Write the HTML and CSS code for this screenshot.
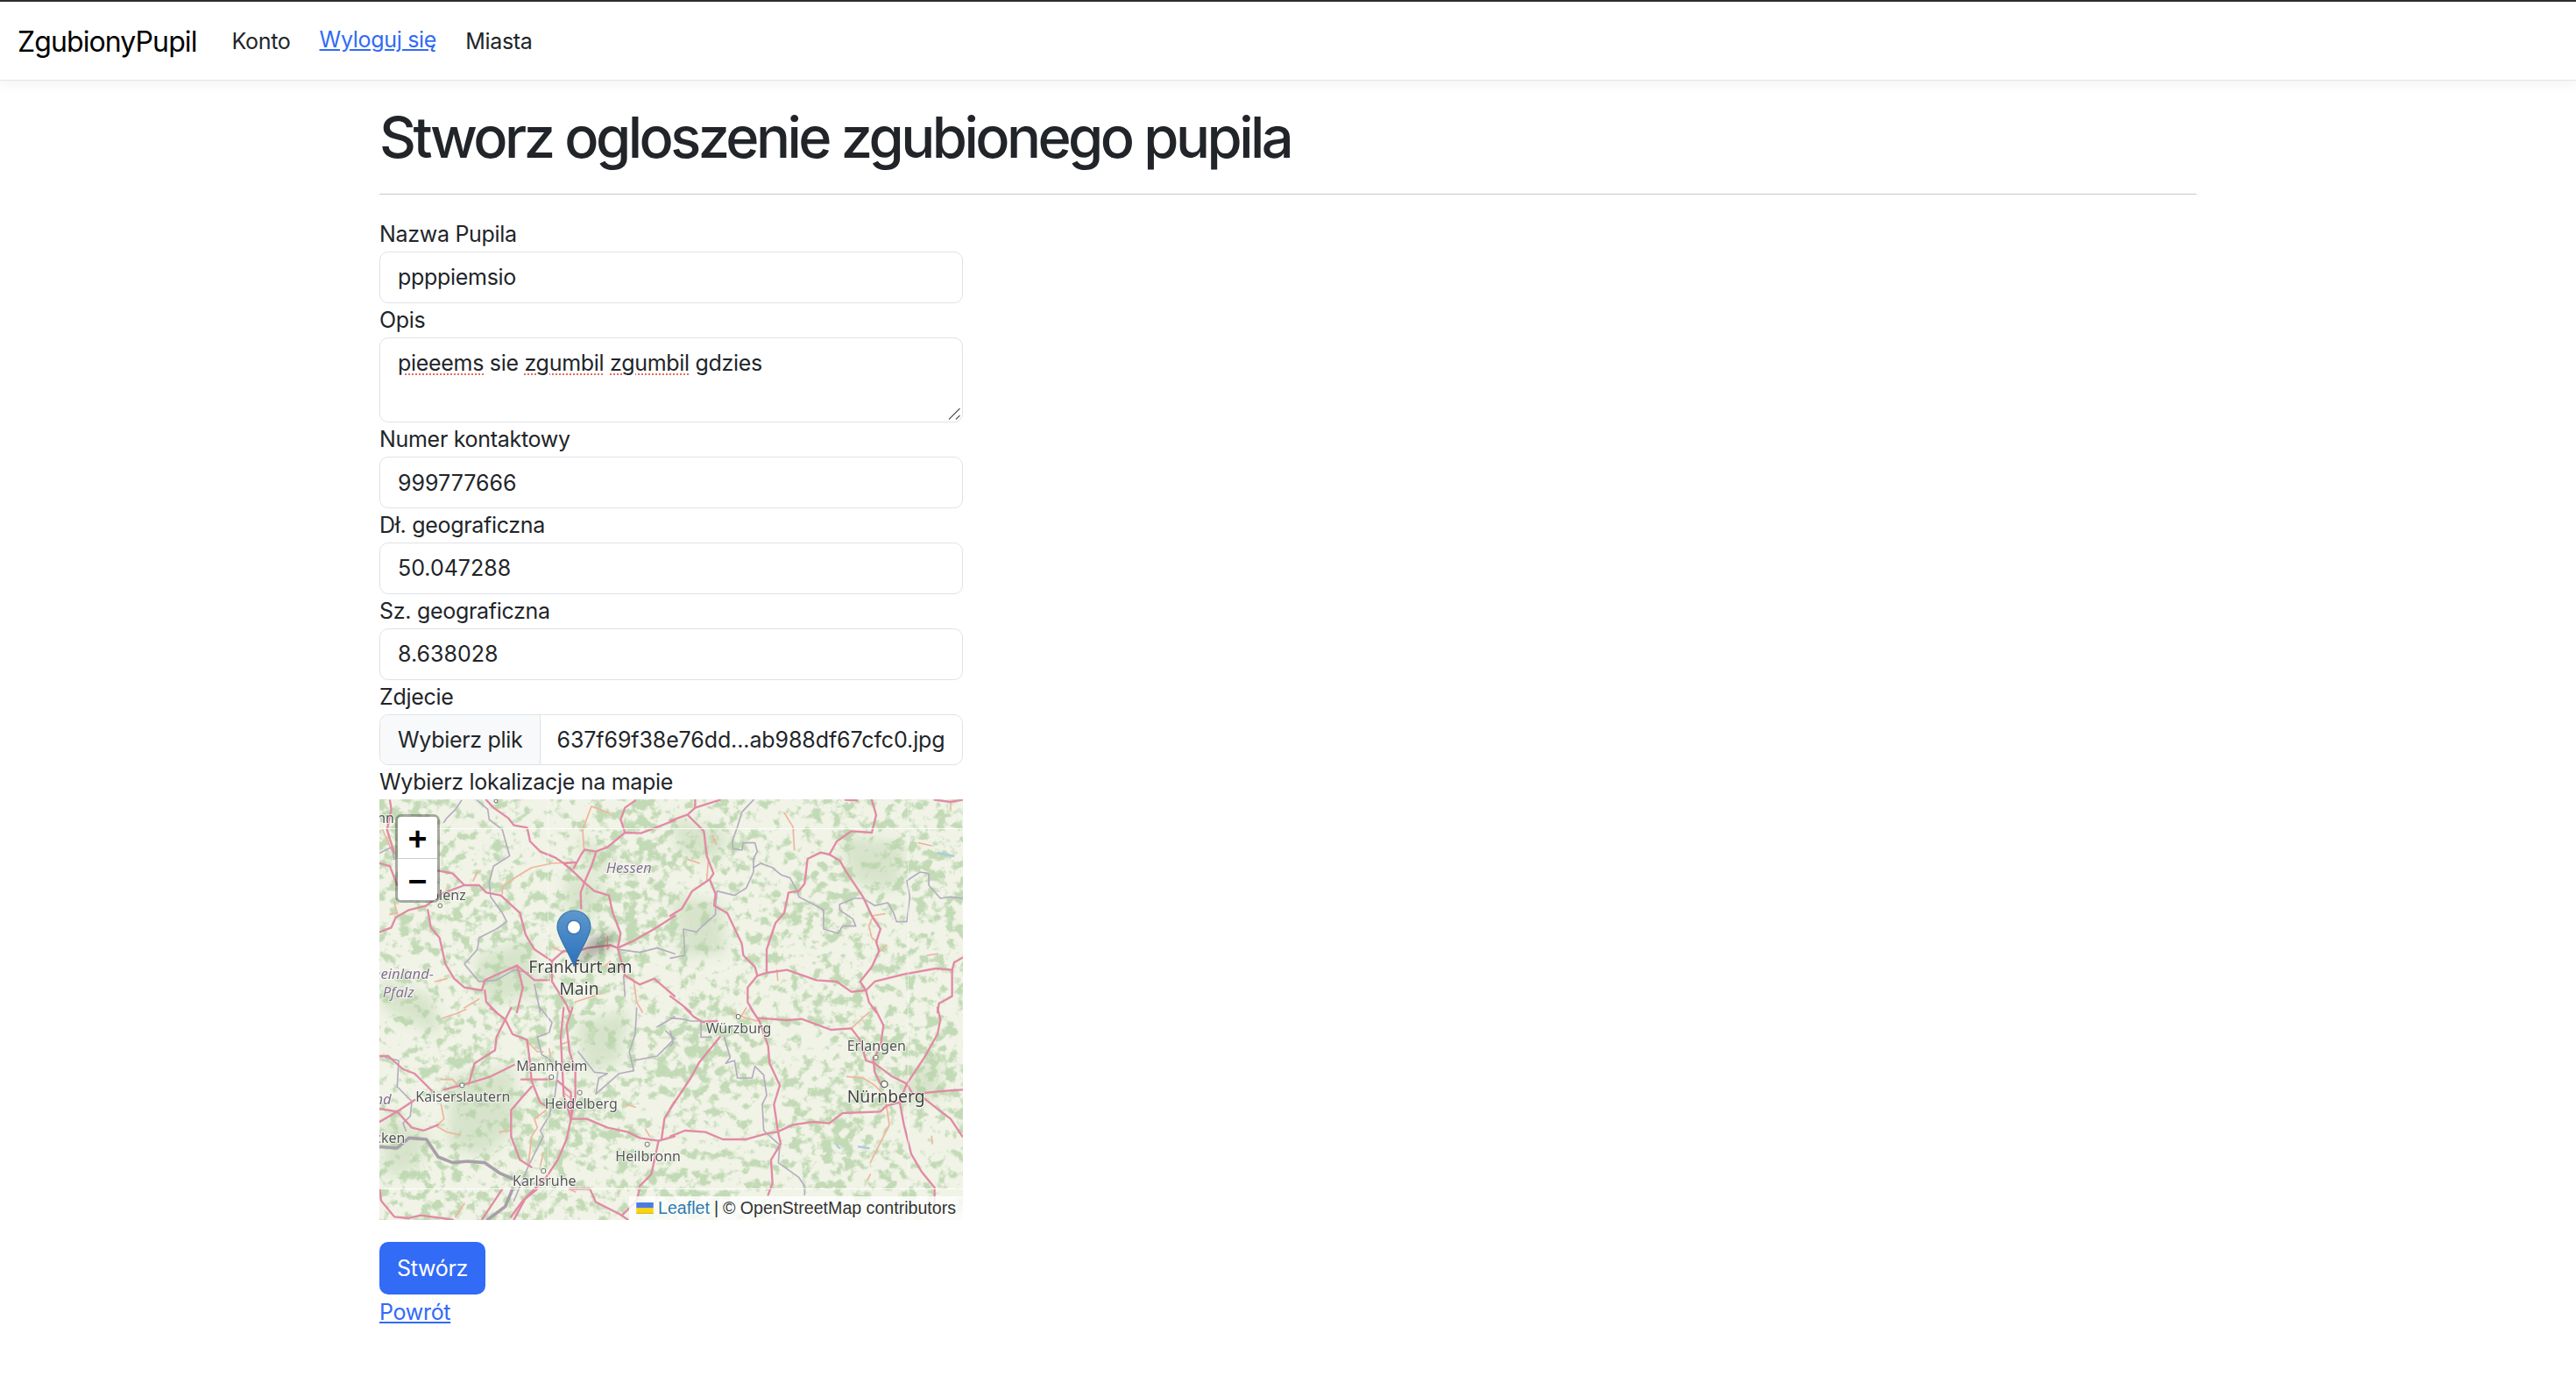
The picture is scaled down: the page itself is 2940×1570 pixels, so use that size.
FILE: index.html
```html
<!DOCTYPE html>
<html lang="pl">
<head>
  <meta charset="UTF-8" />
  <title>Stworz ogloszenie</title>
  <link rel="stylesheet" href="styles.css">
</head>
<body>

  <nav class="navbar">
    <a class="brand" href="#">ZgubionyPupil</a>
    <a class="nav-link" href="#">Konto</a>
    <a class="nav-link logout" href="#">Wyloguj się</a>
    <a class="nav-link" href="#">Miasta</a>
  </nav>

  <main class="container">
    <h1>Stworz ogloszenie zgubionego pupila</h1>
    <hr>

    <form class="pet-form">
      <label>Nazwa Pupila</label>
      <input class="form-control" type="text" value="ppppiemsio">

      <label>Opis</label>
      <div class="form-control textarea">
        <span class="typo">pieeems</span> sie <span class="typo">zgumbil</span> <span class="typo">zgumbil</span> gdzies
        <svg class="grip" viewBox="0 0 14 14" width="14" height="14"><path d="M1 13.5 L13.5 1 M9 13.5 L13.5 9"/></svg>
      </div>

      <label>Numer kontaktowy</label>
      <input class="form-control numeric" type="text" value="999777666">

      <label>Dł. geograficzna</label>
      <input class="form-control numeric" type="text" value="50.047288">

      <label>Sz. geograficzna</label>
      <input class="form-control numeric" type="text" value="8.638028">

      <label>Zdjecie</label>
      <div class="form-control file-input">
        <span class="file-button">Wybierz plik</span>
        <span class="file-name">637f69f38e76dd...ab988df67cfc0.jpg</span>
      </div>

      <label>Wybierz lokalizacje na mapie</label>
      <div class="map">
        <svg class="tiles" viewBox="0 0 666 480" width="666" height="480">
          <defs>
            <filter id="woods" x="0" y="0" width="100%" height="100%" color-interpolation-filters="sRGB">
              <feTurbulence type="fractalNoise" baseFrequency="0.012" numOctaves="2" seed="4"/>
              <feColorMatrix type="matrix" values="1 0 0 0 0  0 1 0 0 0  0 0 1 0 0  0 0 0 0 1" result="big"/>
              <feTurbulence type="fractalNoise" baseFrequency="0.085" numOctaves="4" seed="11"/>
              <feColorMatrix type="matrix" values="1 0 0 0 0  0 1 0 0 0  0 0 1 0 0  0 0 0 0 1" result="fine"/>
              <feComposite in="big" in2="fine" operator="arithmetic" k1="0" k2="0.25" k3="0.75" k4="0"/>
              <feColorMatrix type="matrix" values="0 0 0 0 0  0 0 0 0 0  0 0 0 0 0  8 0 0 0 -4"/>
              <feComposite in="SourceGraphic" operator="in"/>
            </filter>
            <filter id="soft"><feGaussianBlur stdDeviation="7"/></filter>
            <filter id="shade" x="-50%" y="-50%" width="200%" height="200%"><feGaussianBlur stdDeviation="5"/></filter>
          </defs>

          <rect class="land" width="666" height="480"/>
          <rect class="woods" width="666" height="480" filter="url(#woods)"/>

          <!-- big forests -->
          <g class="forest" filter="url(#soft)">
            <path d="M82 318 L152 305 L158 372 L120 408 L78 395 Z"/>
            <path d="M5 360 L60 385 L40 425 L5 430 Z"/>
            <path d="M525 40 L600 50 L590 105 L540 95 Z"/>
            <path d="M335 20 L400 40 L385 70 L340 60 Z"/>
            <path d="M225 40 L270 70 L240 90 Z"/>
            <path d="M110 180 L170 160 L185 220 L120 235 Z"/>
            <path d="M3 205 L60 225 L70 270 L5 240 Z"/>
            <path d="M215 85 L260 100 L240 140 L210 120 Z"/>
            <path d="M335 110 L390 120 L395 175 L345 180 Z"/>
            <path d="M590 330 L640 290 L640 340 L600 350 Z"/>
            <path d="M225 255 L285 240 L275 300 L235 310 Z"/>
          </g>

          <!-- top left -->
          <g transform="translate(-3,-2) scale(0.3333)">
            <g class="minor">
              <path d="M430 330 L430 305 L480 270 L530 240 L600 225 L680 222"/>
              <path d="M710 180 L705 110 L735 30 L800 55"/>
              <path d="M600 510 L640 530"/>
              <path d="M790 475 L790 520 L800 505"/>
              <path d="M800 560 L780 580"/>
              <path d="M850 610 L880 625 L890 700 L910 735"/>
              <path d="M330 285 L345 255"/>
              <path d="M20 110 L50 180"/>
              <path d="M60 360 L70 395 L45 400"/>
              <path d="M680 700 L770 670"/>
              <path d="M300 720 L350 690"/>
              <path d="M240 620 L200 630"/>
            </g>
            <g class="border">
              <path d="M290 10 L270 40 L240 70 L230 85"/>
              <path d="M345 10 L380 40 L385 75 L430 110 L455 200 L400 235 L385 290 L390 340 L430 395 L445 425 L410 450 L350 480 L345 520 L300 570 L350 630 L410 625 L470 590 L520 600"/>
              <path d="M10 190 L50 170 L60 210"/>
              <path d="M830 520 L900 530 L960 515 L1020 535"/>
              <path d="M845 610 L850 680"/>
              <path d="M540 640 L560 735"/>
            </g>
            <g class="road">
              <path d="M45 10 L50 40 L35 110 L60 190"/>
              <path d="M375 8 L400 35 L450 70 L470 95 L515 103 L525 150 L560 185 L610 205 L640 225 L680 222"/>
              <path d="M640 225 L675 255 L710 290 L745 320 L795 335 L808 395 L835 465 L825 515"/>
              <path d="M675 240 L700 195 L712 178 L750 185 L790 170 L850 120 L905 122 L950 105 L1020 78"/>
              <path d="M750 190 L735 235 L712 288 L698 325 L700 380"/>
              <path d="M850 120 L835 75 L850 35 L885 10"/>
              <path d="M10 225 L45 235 L70 300"/>
              <path d="M210 250 L260 260 L300 300 L350 300 L375 325 L425 335 L490 395 L510 470 L540 520 L600 560"/>
              <path d="M10 460 L50 445 L65 410 L110 385 L170 370 L220 330 L300 300"/>
              <path d="M175 385 L185 445 L215 480 L235 570 L265 620 L300 650 L360 660 L370 625 L480 575 L540 625 L590 625"/>
              <path d="M370 660 L375 700 L410 735"/>
              <path d="M480 735 L500 650 L490 610 L480 575"/>
              <path d="M600 560 L640 525 L680 530 L720 515 L800 505 L825 515 L880 490 L950 450 L1020 405"/>
              <path d="M600 560 L600 630 L650 710 L660 735"/>
              <path d="M825 515 L850 610 L900 640 L950 620 L1020 680"/>
            </g>
            <circle class="town" cx="408" cy="12" r="6"/>
            <circle class="town" cx="217" cy="370" r="7"/>
            <text class="city" x="305" y="350" text-anchor="end">Koblenz</text>
            <text class="city" x="60" y="88" text-anchor="end">Bonn</text>
            <text class="city-lg" x="520" y="600">Frankfurt am</text>
            <text class="city-lg" x="625" y="675">Main</text>
            <text class="state" x="785" y="258">Hessen</text>
            <text class="state" x="195" y="622" text-anchor="end">Rheinland-</text>
            <text class="state" x="20" y="685">Pfalz</text>
          </g>

          <!-- top right -->
          <g transform="translate(332,-2) scale(0.3333)">
            <g class="minor">
              <path d="M390 52 L420 100 L425 180"/>
              <path d="M60 212 L100 225"/>
              <path d="M145 130 L158 160"/>
              <path d="M130 220 L125 280"/>
              <path d="M690 405 L735 398"/>
              <path d="M690 415 L680 440 L690 480 L710 495"/>
              <path d="M720 525 L740 505"/>
              <path d="M880 540 L915 535"/>
              <path d="M850 155 L895 165"/>
              <path d="M365 590 L368 625"/>
              <path d="M960 15 L960 40"/>
            </g>
            <path class="lake" d="M915 190 L970 200"/>
            <g class="border">
              <path d="M285 8 L245 50 L230 100 L212 150 L215 175 L245 180 L250 155 L290 155 L298 185 L285 210 L285 255 L260 310 L220 335 L160 320 L155 370 L155 400 L110 440 L90 460 L45 450 L50 540 L0 550"/>
              <path d="M285 240 L310 225 L350 240 L380 265 L410 275 L435 320 L440 340 L490 365 L525 385 L525 450 L575 465 L590 440 L635 440 L625 415 L580 385 L580 365 L630 345 L660 345 L700 370 L745 360 L765 395 L775 425 L810 425 L820 340 L810 285 L855 255 L885 260 L885 300 L925 345 L960 340 L1000 345"/>
            </g>
            <g class="road">
              <path d="M0 80 L60 58 L85 35 L85 8"/>
              <path d="M85 35 L170 8"/>
              <path d="M60 60 L115 115 L125 200 L148 260 L135 280 L155 330 L150 370 L195 395 L245 500 L250 540 L290 580 L298 610"/>
              <path d="M135 280 L75 320 L40 380 L0 405"/>
              <path d="M298 610 L265 650 L265 700 L285 735"/>
              <path d="M298 610 L330 600 L400 590 L500 625 L570 630 L620 665 L670 660 L700 630 L800 605 L910 585 L965 590 L965 680 L920 705 L915 735"/>
              <path d="M965 590 L972 565 L1000 548"/>
              <path d="M330 595 L330 520 L360 430 L390 395 L405 325 L440 320 L460 295 L470 210 L515 188 L545 195 L570 150 L620 115 L690 120 L705 60 L690 8"/>
              <path d="M545 195 L580 215 L600 250 L660 340 L690 405 L720 450 L705 495 L715 525 L690 580 L650 630 L670 660 L680 700 L705 735"/>
              <path d="M0 680 L40 710 L70 735"/>
              <path d="M600 8 L640 10"/>
              <path d="M905 8 L960 15 L1000 8"/>
            </g>
          </g>

          <!-- bottom left -->
          <g transform="translate(-3,238) scale(0.3333)">
            <g class="minor">
              <path d="M225 35 L270 20 L305 5"/>
              <path d="M220 245 L260 245 L275 262"/>
              <path d="M220 330 L230 380 L205 405 L240 425 L285 435"/>
              <path d="M420 425 L460 420"/>
              <path d="M520 530 L530 440 L550 410 L540 380 L580 350"/>
              <path d="M590 140 L595 165"/>
              <path d="M520 120 L550 150 L570 150"/>
              <path d="M560 540 L570 500"/>
              <path d="M630 125 L660 115"/>
              <path d="M855 330 L885 340"/>
              <path d="M660 620 L680 630"/>
              <path d="M300 670 L270 715"/>
              <path d="M920 415 L935 440"/>
              <path d="M640 290 L665 310"/>
            </g>
            <g class="border">
              <path d="M560 0 L600 50 L590 85 L550 100 L565 160 L590 175 L620 220 L610 300 L590 370 L560 420 L570 440 L520 540 L470 660"/>
              <path d="M890 0 L885 90 L865 150 L880 215 L830 225 L790 260 L750 295 L760 240 L790 225 L745 220 L690 150"/>
              <path d="M960 65 L1020 30"/>
              <path d="M880 180 L960 165 L1020 105 L990 80"/>
              <path d="M30 170 L75 180 L70 270 L120 320 L115 370 L90 395 L100 420"/>
            </g>
            <g class="border-wide">
              <path d="M10 475 L70 480 L110 445 L170 450 L210 510 L260 530 L310 525 L370 530 L420 565 L465 585"/>
              <path d="M465 620 L440 680 L380 725"/>
            </g>
            <g class="road">
              <path d="M390 0 L440 40 L410 100 L405 145 L335 190 L315 260"/>
              <path d="M440 40 L465 90 L515 110 L525 190 L530 250 L560 325 L580 335"/>
              <path d="M230 280 L315 258 L390 235 L470 195"/>
              <path d="M495 245 L590 245"/>
              <path d="M10 165 L40 165 L90 210 L130 225 L190 285"/>
              <path d="M10 345 L70 355 L120 410 L160 420 L210 400"/>
              <path d="M10 390 L70 355 L130 315"/>
              <path d="M530 270 L490 315 L460 350 L460 440 L490 520 L530 545"/>
              <path d="M460 0 L440 40"/>
              <path d="M640 0 L630 100 L640 300 L665 380"/>
              <path d="M670 0 L650 60 L660 150 L680 210 L680 300 L665 380"/>
              <path d="M620 250 L665 290 L665 380"/>
              <path d="M665 380 L650 450 L620 520 L580 580 L510 650 L470 725"/>
              <path d="M665 380 L720 380 L790 410 L860 425 L900 445 L965 455 L1020 440"/>
              <path d="M965 455 L940 570 L900 610"/>
              <path d="M1020 320 L985 380 L975 450"/>
              <path d="M430 620 L360 725"/>
              <path d="M660 620 L730 620 L750 665 L830 705 L860 725"/>
              <path d="M10 620 L15 660 L60 715 L110 720 L150 710 L260 725"/>
              <path d="M900 620 L890 660 L840 710"/>
              <path d="M550 620 L500 660 L460 715"/>
            </g>
            <rect class="town" x="285" y="258" width="14" height="14" rx="4"/>
            <rect class="town" x="591" y="230" width="14" height="14" rx="4"/>
            <rect class="town" x="688" y="283" width="14" height="14" rx="4"/>
            <rect class="town" x="564" y="551" width="14" height="14" rx="4"/>
            <rect class="town" x="919" y="460" width="14" height="14" rx="4"/>
            <text class="city" x="133" y="320">Kaiserslautern</text>
            <text class="city" x="478" y="215">Mannheim</text>
            <text class="city" x="575" y="345">Heidelberg</text>
            <text class="city" x="465" y="610">Karlsruhe</text>
            <text class="city" x="817" y="525">Heilbronn</text>
            <text class="city" x="97" y="463" text-anchor="end">Saarbrücken</text>
            <text class="state" x="50" y="330" text-anchor="end">Saarland</text>
          </g>

          <!-- bottom right -->
          <g transform="translate(332,238) scale(0.3333)">
            <g class="minor">
              <path d="M210 15 L260 35 L300 45"/>
              <path d="M260 0 L245 25"/>
              <path d="M605 235 L660 240 L700 265 L735 300 L750 400 L700 500 L685 530"/>
              <path d="M620 70 L680 15"/>
              <path d="M685 570 L675 590"/>
              <path d="M895 440 L897 465"/>
            </g>
            <path class="lake" d="M570 470 L580 480"/>
            <path class="lake" d="M645 475 L680 480"/>
            <g class="border">
              <path d="M0 35 L40 38 L70 45 L105 45 L105 100 L140 100"/>
              <path d="M185 100 L205 170 L190 190 L220 180 L230 240 L280 240 L290 200 L320 230 L330 300 L315 330 L320 420 L375 470 L370 530 L440 580 L460 610 L460 640"/>
              <path d="M0 80 L10 120 L0 130"/>
            </g>
            <g class="road">
              <path d="M50 0 L80 30 L110 48 L160 45"/>
              <path d="M300 35 L400 42 L450 38 L550 75 L620 70 L650 110 L670 180 L700 190"/>
              <path d="M305 45 L335 130 L340 190 L375 265 L355 330 L370 430 L378 465 L345 520 L350 600 L335 640"/>
              <path d="M170 100 L100 185 L70 240 L30 300 L0 345"/>
              <path d="M0 440 L50 420 L120 425 L180 450 L260 450 L330 430 L365 425 L420 400 L490 390 L545 395 L590 360 L720 355 L740 335 L800 320"/>
              <path d="M695 170 L700 220 L720 260"/>
              <path d="M700 190 L760 235 L810 260 L870 170 L915 90 L925 40 L915 0"/>
              <path d="M700 0 L730 60 L720 130 L700 170"/>
              <path d="M810 260 L785 320 L800 400 L825 500 L860 560 L905 615 L905 700"/>
              <path d="M810 260 L830 295 L930 285 L1000 280"/>
              <path d="M870 310 L920 350 L960 380 L1000 440"/>
              <path d="M275 0 L305 45"/>
            </g>
            <rect class="town" x="226" y="23" width="14" height="14" rx="4"/>
            <rect class="town" x="697" y="163" width="14" height="14" rx="4"/>
            <circle class="town big" cx="733" cy="261" r="11"/>
            <text class="city" x="122" y="88">Würzburg</text>
            <text class="city" x="605" y="148">Erlangen</text>
            <text class="city-lg" x="605" y="325">Nürnberg</text>
          </g>

          <!-- tile seams -->
          <path class="seam" d="M0 33.5 H666 M0 444.5 H666"/>
          <path class="seam faint" d="M192.5 0 V480 M603.5 0 V480"/>

          <path class="marker-shadow" d="M222 190 L240 158 L268 150 L262 172 Z" filter="url(#shade)"/>
        </svg>

        <div class="zoom-control">
          <a class="zoom-btn" href="#">+</a>
          <a class="zoom-btn" href="#">−</a>
        </div>

        <svg class="marker" viewBox="0 0 40 65" width="40" height="65">
          <defs>
            <linearGradient id="pin" x1="0" y1="0" x2="0" y2="1">
              <stop offset="0" stop-color="#5f97cd"/>
              <stop offset="1" stop-color="#2a72bc"/>
            </linearGradient>
          </defs>
          <path d="M20 1 C9 1 1 9.5 1 20 C1 30 14 48 20 64 C26 48 39 30 39 20 C39 9.5 31 1 20 1 Z" fill="url(#pin)" stroke="#3a75a8" stroke-width="1.2"/>
          <circle cx="20" cy="20" r="8.5" fill="#2f6ea8" opacity="0.7"/>
          <circle cx="20" cy="20" r="7" fill="#fff"/>
        </svg>

        <div class="attribution">
          <svg class="flag" viewBox="0 0 12 8" width="20" height="13"><path fill="#4c7be1" d="M0 0h12v4H0z"/><path fill="#ffd500" d="M0 4h12v3H0z"/><path fill="#e0bc00" d="M0 7h12v1H0z"/></svg>
          <a href="#">Leaflet</a> <span class="sep">|</span> © OpenStreetMap contributors
        </div>
      </div>

      <button class="btn-primary" type="button">Stwórz</button>
    </form>

    <a class="back-link" href="#">Powrót</a>
  </main>

</body>
</html>
```

FILE: styles.css
```css
* {
  box-sizing: border-box;
}

body {
  margin: 0;
  background: #fff;
  color: #212529;
  font-family: Inter, "Liberation Sans", sans-serif;
  font-size: 25px;
  letter-spacing: -0.3px;
  line-height: 39px;
}

a {
  color: #316bf6;
}

/* navbar */
.navbar {
  display: flex;
  align-items: center;
  height: 92px;
  padding-top: 2px;
  padding-left: 20px;
  background: #fff;
  border-top: 2px solid #2b2c30;
  border-bottom: 1px solid #e4e4e6;
  box-shadow: 0 4px 14px rgba(0, 0, 0, 0.05);
}

.brand {
  margin-right: 40px;
  color: #000;
  font-size: 32px;
  letter-spacing: -0.9px;
  text-decoration: none;
}

.nav-link {
  margin-right: 33px;
  color: #212529;
  text-decoration: none;
}

.logout {
  margin-bottom: 4px;
  color: #316bf6;
  text-decoration: underline;
}

/* page */
.container {
  width: 2074px;
  margin: 0 auto;
}

h1 {
  margin: 26px 0 25px;
  font-size: 65px;
  font-weight: 500;
  letter-spacing: -3.55px;
  line-height: 78px;
}

hr {
  height: 1px;
  margin: 0 0 26px;
  border: 0;
  background: #c8c9ca;
}

.pet-form {
  display: flex;
  flex-direction: column;
  align-items: flex-start;
  width: 666px;
}

label {
  display: block;
  height: 39px;
  line-height: 39px;
}

.form-control {
  display: block;
  width: 100%;
  height: 58.75px;
  padding: 9px 20px;
  border: 1px solid #dee2e6;
  border-radius: 10px;
  background: #fff;
  color: #212529;
  font: inherit;
  letter-spacing: inherit;
  outline: none;
}

.numeric {
  letter-spacing: 0;
}

.textarea {
  position: relative;
  height: 97.5px;
  overflow: hidden;
}

.grip {
  position: absolute;
  right: 2px;
  bottom: 2px;
  fill: none;
  stroke: #5a5a5a;
  stroke-width: 1.2;
}

.typo {
  text-decoration: underline dotted #e8685c 2px;
  text-underline-offset: 4px;
}

.file-input {
  display: flex;
  padding: 0;
  overflow: hidden;
  white-space: nowrap;
}

.file-button {
  padding: 9px 19px 9px 20px;
  border-right: 1px solid #dee2e6;
  background: #f8f9fa;
}

.file-name {
  padding: 9px 19px;
  letter-spacing: -0.1px;
}

/* map */
.map {
  position: relative;
  width: 666px;
  height: 480px;
  overflow: hidden;
  letter-spacing: 0;
}

.tiles {
  display: block;
  filter: blur(0.5px);
}

.land {
  fill: #f0f3e6;
}

.woods {
  fill: #c2dab5;
}

.forest {
  fill: #b9d3ab;
  opacity: 0.45;
}

.road,
.minor,
.border,
.border-wide,
.lake,
.seam {
  fill: none;
  stroke-linejoin: round;
  stroke-linecap: round;
}

.road {
  stroke: #e28aa4;
  stroke-width: 7;
}

.minor {
  stroke: #f0b49c;
  stroke-width: 5;
}

.border {
  stroke: #b4adbf;
  stroke-width: 5;
}

.border-wide {
  stroke: #a89fa9;
  stroke-width: 11;
}

.lake {
  stroke: #aacbe0;
  stroke-width: 7;
}

.seam {
  stroke: rgba(255, 255, 255, 0.85);
  stroke-width: 1;
}

.seam.faint {
  stroke: rgba(255, 255, 255, 0.45);
}

.town {
  fill: #fff;
  stroke: #666;
  stroke-width: 3;
}

.town.big {
  stroke-width: 4;
}

.city,
.city-lg,
.state {
  font-family: "Noto Sans", sans-serif;
  stroke: rgba(255, 255, 255, 0.7);
  stroke-width: 6;
  paint-order: stroke;
}

.city {
  fill: #555;
  font-size: 48px;
}

.city-lg {
  fill: #444;
  font-size: 58px;
}

.state {
  fill: #85718f;
  font-size: 50px;
  font-style: italic;
}

.marker-shadow {
  fill: rgba(0, 0, 0, 0.25);
}

.zoom-control {
  position: absolute;
  left: 18px;
  top: 17px;
  width: 51px;
  border: 3px solid rgba(0, 0, 0, 0.3);
  border-radius: 7px;
  background-clip: padding-box;
  overflow: hidden;
}

.zoom-btn {
  display: block;
  height: 47px;
  background: #fff;
  color: #000;
  font-family: "DejaVu Sans Mono", "Liberation Mono", monospace;
  font-size: 35px;
  font-weight: bold;
  line-height: 51px;
  text-align: center;
  text-decoration: none;
}

.zoom-btn + .zoom-btn {
  height: 48px;
  border-top: 1px solid #ccc;
}

.marker {
  position: absolute;
  left: 202px;
  top: 126px;
}

.attribution {
  position: absolute;
  right: 0;
  bottom: 0;
  display: flex;
  align-items: center;
  gap: 5px;
  height: 27px;
  padding: 0 8px;
  background: rgba(255, 255, 255, 0.8);
  color: #333;
  font-family: "Liberation Sans", sans-serif;
  font-size: 19.6px;
  line-height: 27px;
  white-space: nowrap;
}

.attribution a {
  color: #2f7ab0;
  text-decoration: none;
}

.sep {
  color: #333;
}

.btn-primary {
  height: 60px;
  margin-top: 25px;
  padding: 0 20px;
  border: 0;
  border-radius: 10px;
  background: #316bf6;
  color: #fff;
  font: inherit;
  letter-spacing: inherit;
}

.back-link {
  display: inline-block;
  line-height: 41px;
}
```
